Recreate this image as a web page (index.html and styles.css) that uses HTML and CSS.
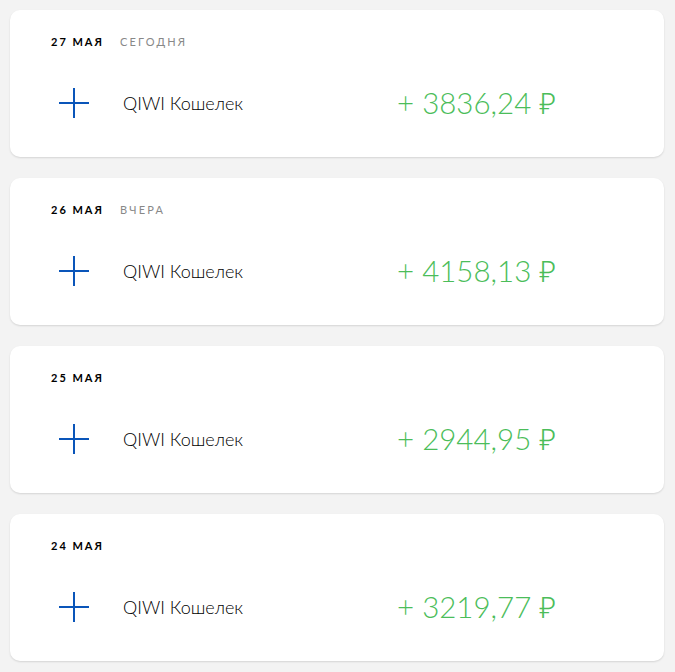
FILE: index.html
```html
<!DOCTYPE html>
<html lang="ru">
<head>
<meta charset="utf-8">
<title>История</title>
<link rel="stylesheet" href="styles.css">
</head>
<body>
<div class="list">
  <section class="card">
    <div class="date"><span class="day">27 мая</span><span class="rel">сегодня</span></div>
    <div class="row">
      <svg class="icon" viewBox="0 0 30 30"><path d="M15 0V30M0 15H30" stroke="#0a55b9" stroke-width="2" fill="none"/></svg>
      <span class="name">QIWI Кошелек</span>
      <span class="amount"><span class="sign">+</span> 3836,24 ₽</span>
    </div>
  </section>
  <section class="card">
    <div class="date"><span class="day">26 мая</span><span class="rel">вчера</span></div>
    <div class="row">
      <svg class="icon" viewBox="0 0 30 30"><path d="M15 0V30M0 15H30" stroke="#0a55b9" stroke-width="2" fill="none"/></svg>
      <span class="name">QIWI Кошелек</span>
      <span class="amount"><span class="sign">+</span> 4158,13 ₽</span>
    </div>
  </section>
  <section class="card">
    <div class="date"><span class="day">25 мая</span></div>
    <div class="row">
      <svg class="icon" viewBox="0 0 30 30"><path d="M15 0V30M0 15H30" stroke="#0a55b9" stroke-width="2" fill="none"/></svg>
      <span class="name">QIWI Кошелек</span>
      <span class="amount"><span class="sign">+</span> 2944,95 ₽</span>
    </div>
  </section>
  <section class="card">
    <div class="date"><span class="day">24 мая</span></div>
    <div class="row">
      <svg class="icon" viewBox="0 0 30 30"><path d="M15 0V30M0 15H30" stroke="#0a55b9" stroke-width="2" fill="none"/></svg>
      <span class="name">QIWI Кошелек</span>
      <span class="amount"><span class="sign">+</span> 3219,77 ₽</span>
    </div>
  </section>
</div>
</body>
</html>
```

FILE: styles.css
```css
html, body {
  margin: 0;
  padding: 0;
  background: #f3f3f3;
}
body {
  font-family: Lato, "Open Sans", "Noto Sans", sans-serif;
  color: #000;
}
.list {
  display: flex;
  flex-direction: column;
  gap: 21px;
  padding: 10px 11px 10px 10px;
}
.card {
  background: #fff;
  border-radius: 10px;
  box-shadow: 0 1px 2px rgba(0, 0, 0, 0.13);
  height: 147px;
  box-sizing: border-box;
  padding: 24px 0 0 0;
}
.date {
  display: flex;
  gap: 16px;
  padding-left: 41px;
  font-size: 11px;
  line-height: 16px;
  text-transform: uppercase;
  letter-spacing: 2px;
}
.day {
  font-weight: 700;
}
.rel {
  color: #888;
  letter-spacing: 2.2px;
}
.row {
  display: grid;
  grid-template-columns: 64px 274px 1fr;
  align-items: center;
  padding-left: 49px;
  margin-top: 32px;
  height: 30px;
}
.icon {
  width: 30px;
  height: 30px;
  display: block;
}
.name {
  font-size: 18px;
  font-weight: 300;
}
.amount {
  font-size: 29.5px;
  font-weight: 300;
  color: #4bbd5a;
  white-space: nowrap;
}
.sign {
  font-weight: 300;
}
```
